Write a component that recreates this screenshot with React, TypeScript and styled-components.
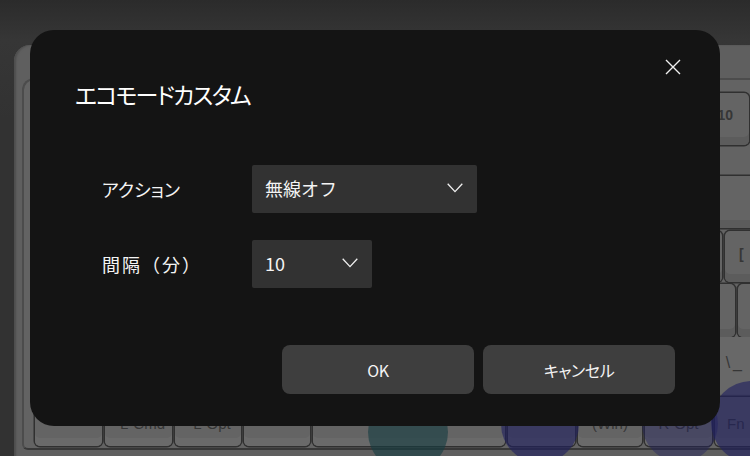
import React from 'react'
import styled, { createGlobalStyle } from 'styled-components'

const FONT = '"Noto Sans CJK JP", "Noto Sans", "Liberation Sans", sans-serif'

const GlobalStyle = createGlobalStyle`
  html, body {
    margin: 0;
    padding: 0;
    background: #323232;
  }
`

const Page = styled.div`
  position: relative;
  width: 750px;
  height: 456px;
  overflow: hidden;
  padding: 45px 0 0 14px;
  box-sizing: border-box;
  background: linear-gradient(#2b2b2b 0, #363636 40px, #323232 120px);
`

const Shell = styled.div`
  width: 800px;
  height: 430px;
  box-sizing: border-box;
  padding: 33px 0 0 8px;
  border-radius: 16px 0 0 0;
  background: #5f5f5f;
  box-shadow: inset 2px 0 2px #4d4d4d;
`

const Plate = styled.div`
  display: flex;
  flex-direction: column;
  height: 372px;
  box-sizing: border-box;
  padding: 13px 0 0 11px;
  border: solid #4c4c4c;
  border-width: 2px 0 2px 2px;
  border-bottom-color: #383838;
  border-radius: 12px 0 0 6px;
  background: #636363;
`

const Row = styled.div<{ $h: number; $after?: number }>`
  display: flex;
  gap: 3px;
  height: ${({ $h }) => $h}px;
  margin-bottom: ${({ $after }) => $after ?? 2}px;
`

const Key = styled.div<{ $w: number; $flat?: boolean }>`
  flex: none;
  display: flex;
  align-items: flex-start;
  justify-content: center;
  width: ${({ $w }) => $w}px;
  box-sizing: border-box;
  padding-top: 14px;
  border-radius: 5px;
  background: #646464;
  box-shadow: ${({ $flat }) => ($flat ? 'none' : '0 0 0 1.5px #303030, inset 0 -8px 0 #5c5c5c')};
  font: 600 14px 'Liberation Sans', sans-serif;
  color: #363636;
`

const NumberKey = styled(Key)`
  justify-content: flex-end;
  padding: 14px 16px 0 0;
`

const BracketKey = styled(Key)`
  justify-content: flex-start;
  padding: 15px 0 0 14px;
`

const SlashKey = styled(Key)`
  justify-content: flex-end;
  padding: 17px 60px 0 0;
  background: #686868;
  font-size: 16px;
  font-weight: 400;
  letter-spacing: 3px;
`

const BottomKey = styled(Key)<{ $nudge?: number }>`
  padding: 18px 0 0 ${({ $nudge }) => $nudge ?? 0}px;
  font-size: 15px;
  font-weight: 400;
  box-shadow: 0 0 0 1.5px #303030, inset 0 -8px 0 #6a6a6a;
`

const FnKey = styled(BottomKey)`
  justify-content: flex-start;
  padding-left: 12px;
`

const Blob = styled.div<{ $x: number; $y: number; $r: number; $c: string }>`
  position: absolute;
  left: ${({ $x, $r }) => $x - $r}px;
  top: ${({ $y, $r }) => $y - $r}px;
  width: ${({ $r }) => $r * 2}px;
  height: ${({ $r }) => $r * 2}px;
  border-radius: 50%;
  background: ${({ $c }) => $c};
`

const Modal = styled.div`
  position: absolute;
  left: 30px;
  top: 30px;
  display: flex;
  flex-direction: column;
  width: 690px;
  height: 396px;
  box-sizing: border-box;
  padding: 0 45px 32px 45px;
  border-radius: 24px;
  background: #141414;
  color: #f4f4f4;
  font-family: ${FONT};
`

const Header = styled.div`
  display: flex;
  align-items: flex-start;
  justify-content: space-between;
  height: 135px;
`

const Title = styled.h1`
  margin: 46px 0 0;
  font-size: 23px;
  line-height: 36px;
  font-weight: 400;
  letter-spacing: -1.7px;
  font-feature-settings: 'palt';
  color: #fff;
`

const CloseButton = styled.div`
  display: flex;
  margin: 29px -6px 0 0;
  color: #f0f0f0;
`

const Form = styled.div`
  display: grid;
  grid-template-columns: 150px auto;
  justify-content: start;
  justify-items: start;
  align-items: center;
  row-gap: 27px;
  padding-left: 27px;
`

const Label = styled.div<{ $kana?: boolean }>`
  font-size: 18px;
  line-height: 48px;
  font-feature-settings: ${({ $kana }) => ($kana ? "'palt'" : 'normal')};
  letter-spacing: ${({ $kana }) => ($kana ? '0' : '2px')};
`

const Select = styled.div<{ $w: number }>`
  display: flex;
  align-items: center;
  justify-content: space-between;
  width: ${({ $w }) => $w}px;
  height: 48px;
  box-sizing: border-box;
  padding: 0 14px 2px 13px;
  border-radius: 2px;
  background: #323232;
  font-size: 18px;
`

const Footer = styled.div`
  display: flex;
  justify-content: flex-end;
  gap: 9px;
  margin-top: auto;
`

const Button = styled.div`
  display: flex;
  align-items: center;
  justify-content: center;
  width: 192px;
  height: 49px;
  border-radius: 8px;
  background: #3e3e3e;
  font-size: 16px;
  font-feature-settings: 'palt';
  letter-spacing: -0.4px;
`

const Chevron = () => (
  <svg width="16" height="10" viewBox="0 0 16 10" fill="none" stroke="#f0f0f0" strokeWidth="1.3">
    <path d="M0.7 0.8 L8 8.6 L15.3 0.8" />
  </svg>
)

const App = () => (
  <>
    <GlobalStyle />
    <Page>
      <Shell>
        <Plate>
          <Row $h={52} $after={31}>
            <NumberKey $w={714}>10</NumberKey>
          </Row>
          <Row $h={52} $after={3}>
            <Key $w={740} />
          </Row>
          <Row $h={52}>
            <Key $w={687} />
            <BracketKey $w={70}>[</BracketKey>
          </Row>
          <Row $h={53} $after={0}>
            <Key $w={700} />
            <Key $w={60} />
          </Row>
          <Row $h={57} $after={3}>
            <SlashKey $w={770} $flat>\_</SlashKey>
          </Row>
          <Row $h={49}>
            <BottomKey $w={67} />
            <BottomKey $w={67} $nudge={8}>L-Cmd</BottomKey>
            <BottomKey $w={66} $nudge={8}>L-Opt</BottomKey>
            <BottomKey $w={66} />
            <BottomKey $w={192} />
            <BottomKey $w={67} />
            <BottomKey $w={64}>(Win)</BottomKey>
            <BottomKey $w={67}>R-Opt</BottomKey>
            <FnKey $w={70}>Fn</FnKey>
          </Row>
        </Plate>
      </Shell>

      <Blob $x={408} $y={432} $r={40} $c="rgba(20, 60, 65, 0.6)" />
      <Blob $x={540} $y={424} $r={39} $c="rgba(30, 30, 95, 0.6)" />
      <Blob $x={680} $y={424} $r={38} $c="rgba(30, 30, 95, 0.4)" />
      <Blob $x={752} $y={422} $r={41} $c="rgba(30, 30, 95, 0.6)" />

      <Modal>
        <Header>
          <Title>エコモードカスタム</Title>
          <CloseButton>
            <svg width="16" height="16" viewBox="0 0 16 16" fill="none" stroke="currentColor" strokeWidth="1.4">
              <path d="M1 1 L15 15 M15 1 L1 15" />
            </svg>
          </CloseButton>
        </Header>
        <Form>
          <Label $kana>アクション</Label>
          <Select $w={225}>
            無線オフ
            <Chevron />
          </Select>
          <Label>間隔（分）</Label>
          <Select $w={120}>
            10
            <Chevron />
          </Select>
        </Form>
        <Footer>
          <Button>OK</Button>
          <Button>キャンセル</Button>
        </Footer>
      </Modal>
    </Page>
  </>
)

export default App
